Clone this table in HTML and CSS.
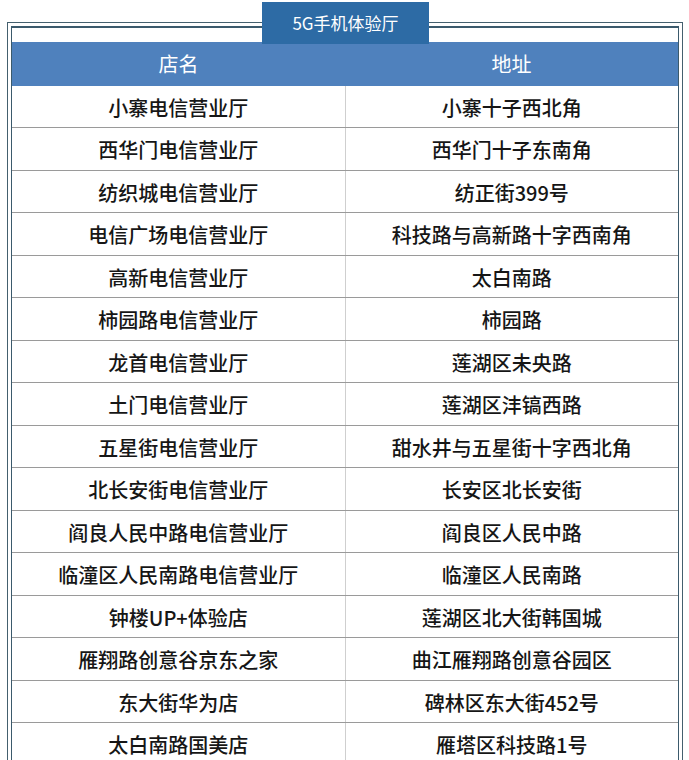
FILE: index.html
```html
<!DOCTYPE html>
<html lang="zh-CN">
<head>
<meta charset="utf-8">
<title>5G手机体验厅</title>
<link rel="stylesheet" href="styles.css">
</head>
<body>
<div class="page">
  <div class="tab">5G手机体验厅</div>
  <div class="frame">
    <div class="inner">
      <table class="stores">
        <thead>
          <tr><th>店名</th><th>地址</th></tr>
        </thead>
        <tbody>
          <tr><td>小寨电信营业厅</td><td>小寨十子西北角</td></tr>
          <tr><td>西华门电信营业厅</td><td>西华门十子东南角</td></tr>
          <tr><td>纺织城电信营业厅</td><td>纺正街399号</td></tr>
          <tr><td>电信广场电信营业厅</td><td>科技路与高新路十字西南角</td></tr>
          <tr><td>高新电信营业厅</td><td>太白南路</td></tr>
          <tr><td>柿园路电信营业厅</td><td>柿园路</td></tr>
          <tr><td>龙首电信营业厅</td><td>莲湖区未央路</td></tr>
          <tr><td>土门电信营业厅</td><td>莲湖区沣镐西路</td></tr>
          <tr><td>五星街电信营业厅</td><td>甜水井与五星街十字西北角</td></tr>
          <tr><td>北长安街电信营业厅</td><td>长安区北长安街</td></tr>
          <tr><td>阎良人民中路电信营业厅</td><td>阎良区人民中路</td></tr>
          <tr><td>临潼区人民南路电信营业厅</td><td>临潼区人民南路</td></tr>
          <tr><td>钟楼UP+体验店</td><td>莲湖区北大街韩国城</td></tr>
          <tr><td>雁翔路创意谷京东之家</td><td>曲江雁翔路创意谷园区</td></tr>
          <tr><td>东大街华为店</td><td>碑林区东大街452号</td></tr>
          <tr><td>太白南路国美店</td><td>雁塔区科技路1号</td></tr>
        </tbody>
      </table>
    </div>
  </div>
</div>
</body>
</html>
```
FILE: styles.css
```css
html, body {
  margin: 0;
  padding: 0;
  background: #ffffff;
  overflow: hidden;
}
.page {
  position: relative;
  width: 689px;
  height: 760px;
  padding-top: 22px;
  box-sizing: border-box;
  font-family: "Noto Sans CJK SC", "Noto Sans", sans-serif;
}
.tab {
  position: absolute;
  left: 262px;
  top: 2px;
  width: 167px;
  height: 42px;
  background: #2d6ba5;
  color: #ffffff;
  font-size: 17px;
  line-height: 42px;
  text-align: center;
  z-index: 2;
}
.frame {
  margin-left: 7px;
  width: 676px;
  box-sizing: border-box;
  border: 1px solid #44606e;
  padding: 3px 3px 0 3px;
  height: 760px;
}
.inner {
  border: 1px solid #3b5a6c;
  border-bottom: none;
  border-top-width: 2px;
  padding-top: 14px;
  height: 760px;
  box-sizing: border-box;
}
.stores {
  width: 666px;
  border-collapse: collapse;
  table-layout: fixed;
}
.stores th {
  height: 43.5px;
  padding: 0;
  background: #4f81bd;
  color: #ffffff;
  font-size: 20px;
  font-weight: 400;
  text-align: center;
  vertical-align: middle;
}
.stores td {
  height: 39.5px;
  padding: 2px 0 0 0;
  border-bottom: 1px solid #9a9a9a;
  color: #161616;
  font-size: 20px;
  font-weight: 500;
  text-align: center;
  vertical-align: middle;
  white-space: nowrap;
}
.stores td + td {
  border-left: 1px solid #cfcfcf;
}
```
